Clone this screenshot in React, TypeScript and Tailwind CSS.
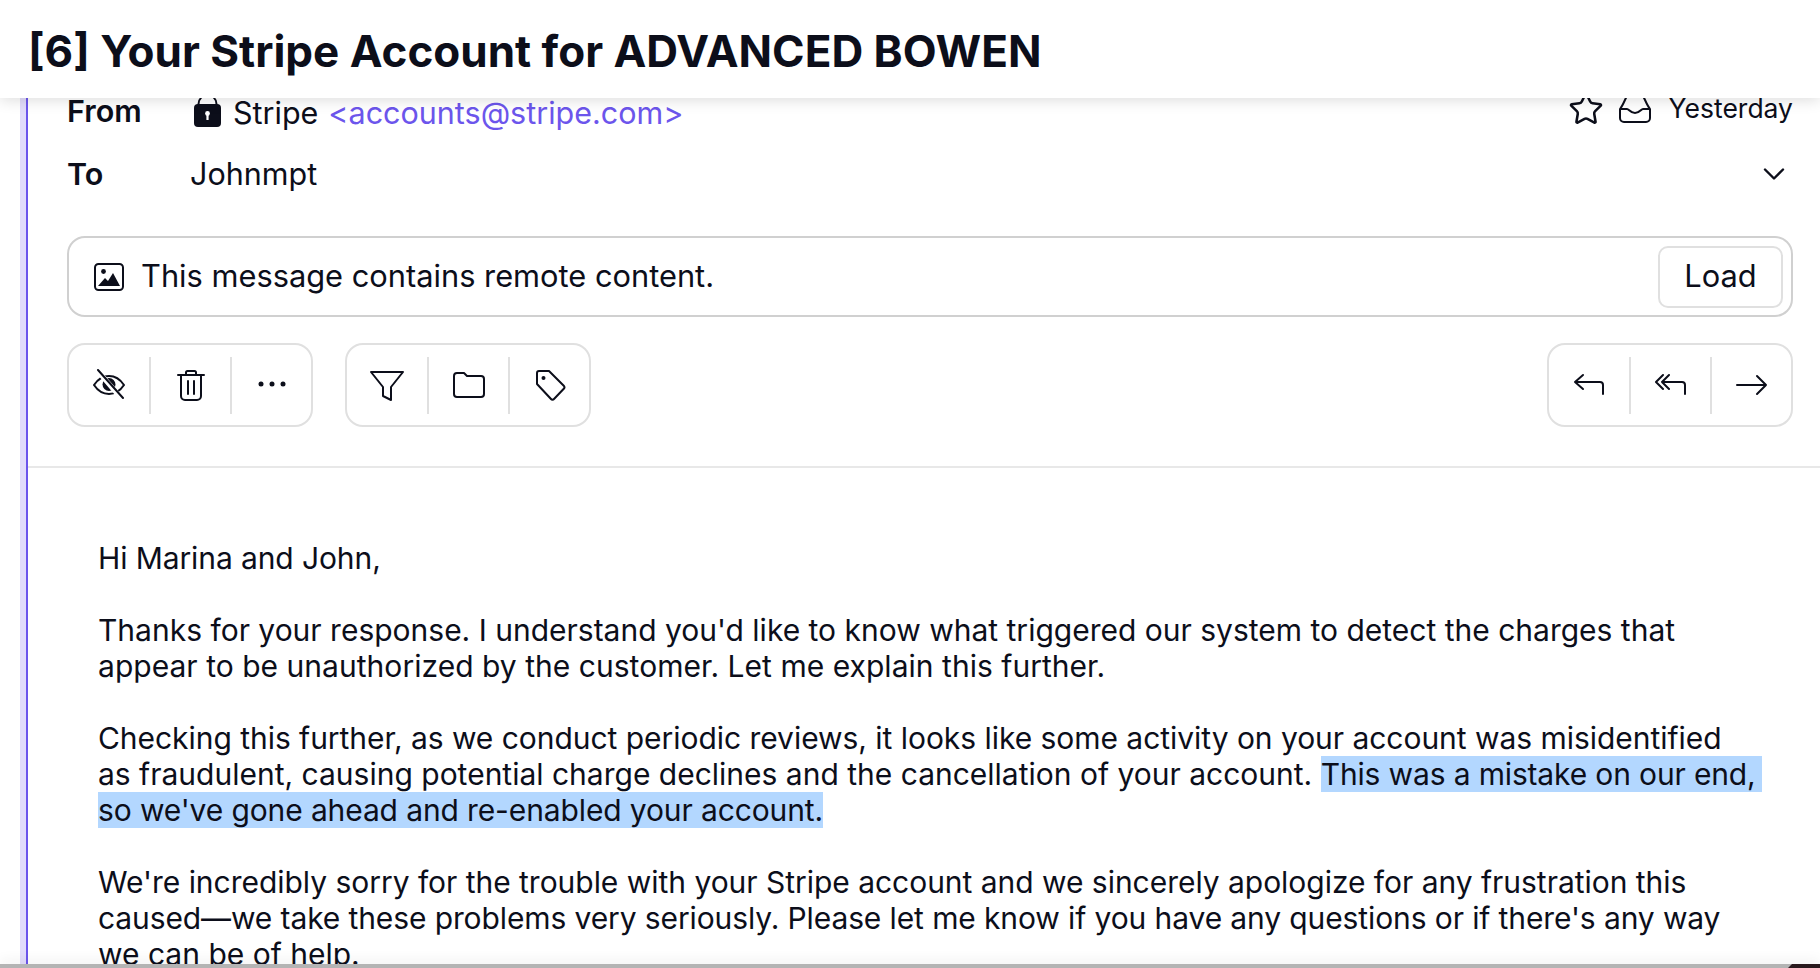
import React from 'react';
import { ChevronDown, Star } from 'lucide-react';

const svg = 'h-8 w-8 fill-none stroke-current stroke-2 [stroke-linejoin:round] [stroke-linecap:round]';

const LockIcon = () => (
  <svg viewBox="0 0 27 32" className="h-8 w-[27px] shrink-0 -translate-y-px">
    <path d="M4.5 12V9a9 9 0 0 1 18 0v3" fill="none" stroke="currentColor" strokeWidth="2" />
    <rect x="0" y="9" width="27" height="23" rx="4" fill="currentColor" />
    <circle cx="13.5" cy="18.5" r="2.4" fill="#fff" />
    <rect x="12.4" y="19" width="2.2" height="6" fill="#fff" />
  </svg>
);

const InboxIcon = () => (
  <svg viewBox="0 0 34 32" className="h-8 w-[34px] fill-none stroke-current stroke-2 [stroke-linejoin:round]">
    <path d="M10 2h14c2 1 4 9 8 14v9a4 4 0 0 1-4 4H6a4 4 0 0 1-4-4v-9C6 11 8 3 10 2Z" />
    <path d="M2 16h7c2 0 3 4 8 4s6-4 8-4h7" />
  </svg>
);

const ImageIcon = () => (
  <svg viewBox="0 0 32 32" className="h-8 w-8 shrink-0">
    <rect x="2" y="3" width="28" height="26" rx="3.5" fill="none" stroke="currentColor" strokeWidth="2" />
    <circle cx="10.5" cy="10.5" r="2.4" fill="currentColor" />
    <path d="M5 25l7-8 3 3 5-8 7 13Z" fill="currentColor" />
  </svg>
);

const EyeOffIcon = () => (
  <svg viewBox="0 0 32 32" className={svg}>
    <path d="M1 16c4-6 9-9 15-9s11 3 15 9c-4 6-9 9-15 9S5 22 1 16Z" />
    <circle cx="16" cy="15.5" r="6.5" fill="currentColor" stroke="none" />
    <path d="M4 1l24 28" stroke="#fff" strokeWidth="5" />
    <path d="M5 1l25 28" />
  </svg>
);

const TrashIcon = () => (
  <svg viewBox="0 0 32 32" className={svg}>
    <path d="M3 6h26M11 6V3.5A1.5 1.5 0 0 1 12.5 2h7A1.5 1.5 0 0 1 21 3.5V6" />
    <path d="M6 6v21a4 4 0 0 0 4 4h12a4 4 0 0 0 4-4V6" />
    <path d="M13 12v13M19 12v13" />
  </svg>
);

const DotsIcon = () => (
  <svg viewBox="0 0 32 32" className="h-8 w-8 fill-current">
    <circle cx="5" cy="15" r="2.5" />
    <circle cx="16" cy="15" r="2.5" />
    <circle cx="27" cy="15" r="2.5" />
  </svg>
);

const FilterIcon = () => (
  <svg viewBox="0 0 36 32" className="h-8 w-9 fill-none stroke-current stroke-2 [stroke-linejoin:round]">
    <path d="M2 3h32L22 18v13l-8-4v-9Z" />
  </svg>
);

const FolderIcon = () => (
  <svg viewBox="0 0 32 28" className="h-7 w-8 fill-none stroke-current stroke-2 [stroke-linejoin:round]">
    <path d="M1 5a3 3 0 0 1 3-3h7l3 3h14a3 3 0 0 1 3 3v15a3 3 0 0 1-3 3H4a3 3 0 0 1-3-3Z" />
  </svg>
);

const TagIcon = () => (
  <svg viewBox="0 0 32 32" className={svg}>
    <path d="M3 4a2 2 0 0 1 2-2h10l15 15a2 2 0 0 1 0 2.5L20 30a2 2 0 0 1-3 0L3 15Z" />
    <circle cx="9.5" cy="9" r="2" fill="currentColor" stroke="none" />
  </svg>
);

const ReplyIcon = () => (
  <svg viewBox="0 0 32 24" className="h-6 w-8 fill-none stroke-current stroke-2 [stroke-linejoin:round] [stroke-linecap:round]">
    <path d="M10 2L2 9l8 7M2 9h25a3 3 0 0 1 3 3v9" />
  </svg>
);

const ReplyAllIcon = () => (
  <svg viewBox="0 0 32 24" className="h-6 w-8 fill-none stroke-current stroke-2 [stroke-linejoin:round] [stroke-linecap:round]">
    <path d="M8 2L1 9l7 7M14 2L7 9l7 7M7 9h20a3 3 0 0 1 3 3v9" />
  </svg>
);

const ForwardIcon = () => (
  <svg viewBox="0 0 32 24" className="h-6 w-8 fill-none stroke-current stroke-2 [stroke-linejoin:round] [stroke-linecap:round]">
    <path d="M1 12h29M21 3l9 9-9 9" />
  </svg>
);

const ToolGroup: React.FC<{ icons: React.ReactNode[] }> = ({ icons }) => (
  <div className="flex h-[84px] w-[246px] items-center rounded-[18px] border-2 border-[#e0e0e0]">
    <div className="flex h-[57px] w-[80px] items-center justify-center">{icons[0]}</div>
    <div className="flex h-[57px] w-[81px] items-center justify-center border-l-2 border-[#e0e0e0]">{icons[1]}</div>
    <div className="flex h-[57px] flex-1 items-center justify-center border-l-2 border-[#e0e0e0]">{icons[2]}</div>
  </div>
);

const App: React.FC = () => {
  return (
    <div className="relative flex h-[968px] flex-col overflow-hidden bg-white text-[#0c0e1a] [font-family:Inter,sans-serif]">
      <header className="relative z-10 flex h-[98px] shrink-0 items-center bg-white pl-7 pt-1 shadow-[0_2px_14px_rgba(0,0,0,0.14)]">
        <h1 className="text-[44px] font-bold leading-none">[6] Your Stripe Account for ADVANCED BOWEN</h1>
      </header>

      <div className="flex min-h-0 flex-1">
        <div className="ml-5 w-[6px] bg-[#e2dcfb]" />
        <div className="w-[2px] bg-[#6c55ec]" />
        <main className="min-w-0 flex-1">
          <section className="pl-[39px] pr-[27px]">
            <div className="flex h-7 items-center text-[30.5px]">
              <span className="w-[127px] -translate-y-px font-semibold">From</span>
              <LockIcon />
              <span className="ml-3 translate-y-px">Stripe</span>
              <span className="ml-[10px] translate-y-px text-[#6c55ec]">&lt;accounts@stripe.com&gt;</span>
              <div className="ml-auto flex -translate-y-[3px] items-center">
                <Star className="h-9 w-9" strokeWidth={1.7} />
                <span className="ml-[14px]"><InboxIcon /></span>
                <span className="ml-[17px] text-[26.5px]">Yesterday</span>
              </div>
            </div>
            <div className="mt-[34px] flex h-7 items-center text-[30.5px]">
              <span className="w-[123px] font-semibold">To</span>
              <span>Johnmpt</span>
              <ChevronDown className="ml-auto mr-px h-9 w-9" strokeWidth={1.6} />
            </div>
            <div className="mt-[48px] flex h-[81px] items-center rounded-[18px] border-2 border-[#d0d0d0] pl-[24px] pr-2">
              <ImageIcon />
              <span className="ml-4 text-[30.8px]">This message contains remote content.</span>
              <button className="ml-auto h-[62px] w-[125px] rounded-[10px] border-2 border-[#e0e0e0] text-[30.8px]">Load</button>
            </div>
            <div className="mt-[26px] flex items-center gap-8">
              <ToolGroup icons={[<EyeOffIcon />, <TrashIcon />, <DotsIcon />]} />
              <ToolGroup icons={[<FilterIcon />, <FolderIcon />, <TagIcon />]} />
              <div className="ml-auto">
                <ToolGroup icons={[<ReplyIcon />, <ReplyAllIcon />, <ForwardIcon />]} />
              </div>
            </div>
          </section>
          <div className="mt-[39px] h-[2px] bg-[#e8e8e8]" />
          <article className="pl-[70px] pt-[72px] text-[30px] leading-9">
            <p className="tracking-[-0.1px]">Hi Marina and John,</p>
            <br />
            <p>
              Thanks for your response. I understand you'd like to know what triggered our system to detect the charges that
              <br />
              <span className="tracking-[0.03px]">appear to be unauthorized by the customer. Let me explain this further.</span>
            </p>
            <br />
            <p>
              <span className="tracking-[-0.04px]">Checking this further, as we conduct periodic reviews, it looks like some activity on your account was misidentified</span>
              <br />
              as fraudulent, causing potential charge declines and the cancellation of your account.{' '}
              <span className="bg-[#b3d7ff] pr-[6px] tracking-[-0.15px]">This was a mistake on our end,</span>
              <br />
              <span className="bg-[#b3d7ff] tracking-[-0.12px]">so we've gone ahead and re-enabled your account.</span>
            </p>
            <br />
            <p>
              <span className="tracking-[-0.03px]">We're incredibly sorry for the trouble with your Stripe account and we sincerely apologize for any frustration this</span>
              <br />
              <span className="tracking-[-0.11px]">caused—we take these problems very seriously. Please let me know if you have any questions or if there's any way</span>
              <br />
              we can be of help.
            </p>
          </article>
        </main>
      </div>

      <div className="absolute inset-x-0 bottom-0 z-10 flex h-1 bg-[#b4b4b4] shadow-[0_-3px_12px_rgba(0,0,0,0.1)]">
        <div className="ml-auto w-[32px] bg-[#2a1a1e] [clip-path:polygon(4px_0,100%_0,100%_100%,0_100%)]" />
      </div>
    </div>
  );
};

export default App;
